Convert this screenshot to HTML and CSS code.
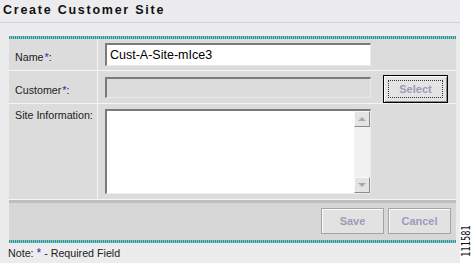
FILE: index.html
```html
<!DOCTYPE html>
<html>
<head>
<meta charset="utf-8">
<link rel="stylesheet" href="styles.css">
</head>
<body>
<div class="page">
  <div class="main">
    <div class="title">Create Customer Site</div>
    <div class="panel">
      <div class="teal"></div>
      <div class="row r1">
        <div class="lbl">Name<sup class="req">*</sup>:</div>
        <div class="fld">
          <input class="txt" type="text" value="Cust-A-Site-mIce3">
        </div>
      </div>
      <div class="row r2">
        <div class="lbl">Customer<sup class="req">*</sup>:</div>
        <div class="fld">
          <div class="txt dis"></div>
          <button class="btn sel"><span class="focus">Select</span></button>
        </div>
      </div>
      <div class="row r3">
        <div class="lbl top">Site Information:</div>
        <div class="fld top">
          <div class="ta">
            <textarea class="tai"></textarea>
            <div class="sb">
              <div class="sbb"><span class="arr up"></span></div>
              <div class="sbt"></div>
              <div class="sbb"><span class="arr dn"></span></div>
            </div>
          </div>
        </div>
      </div>
      <div class="rule"></div>
      <div class="bar">
        <button class="btn act">Save</button>
        <button class="btn act">Cancel</button>
      </div>
      <div class="teal"></div>
    </div>
    <div class="note">Note: <span class="star">*</span> - Required Field</div>
  </div>
  <div class="side"><span class="code">111581</span></div>
</div>
</body>
</html>
```

FILE: styles.css
```css
html, body {
  margin: 0;
  padding: 0;
  background: #ffffff;
}
.page {
  display: flex;
  width: 473px;
  height: 263px;
  overflow: hidden;
  font-family: "Liberation Sans", Arial, sans-serif;
}
.main {
  width: 460px;
  height: 263px;
  background: #ecebed;
  display: flex;
  flex-direction: column;
}
.title {
  height: 22px;
  border-bottom: 1px solid #d4d3d6;
  box-sizing: content-box;
  padding-left: 3px;
  font-size: 12.5px;
  font-weight: bold;
  letter-spacing: 1.75px;
  line-height: 21px;
  color: #111;
}
.panel {
  margin: 13px 4px 0 9px;
  display: flex;
  flex-direction: column;
}
.teal {
  height: 3px;
  background: repeating-linear-gradient(90deg, #2e9696 0 1px, #8ccaca 1px 2px);
}
.row {
  display: flex;
  background: #dcdcdc;
  border-bottom: 1px solid #f5f5f5;
}
.r1 { height: 31px; }
.r2 { height: 32px; }
.r3 { height: 95px; }
.lbl {
  width: 89px;
  flex: none;
  box-sizing: border-box;
  padding-left: 6px;
  padding-top: 5px;
  display: flex;
  align-items: center;
  font-size: 10.7px;
  color: #222;
  border-right: 1px solid #f5f5f5;
}
.lbl.top {
  align-items: flex-start;
  padding-top: 5px;
}
.req {
  color: #2a2aa6;
  font-size: 11px;
  vertical-align: 6px;
  line-height: 0;
  margin-left: 1px;
}
.fld {
  flex: 1;
  display: flex;
  align-items: center;
  padding-left: 7px;
}
.fld.top {
  align-items: flex-start;
  padding-top: 5px;
}
.txt {
  width: 266px;
  height: 23px;
  box-sizing: border-box;
  margin: 0;
  padding: 0 3px;
  border-style: solid;
  border-width: 2px 1px 1px 2px;
  border-color: #7a7a7a #e9e9e9 #e9e9e9 #7a7a7a;
  background: #ffffff;
  font-family: "Liberation Sans", Arial, sans-serif;
  font-size: 12.5px;
  color: #000;
  outline: none;
}
.txt.dis {
  height: 21px;
  background: #dcdcdc;
}
.btn {
  margin: 0;
  padding: 0;
  box-sizing: border-box;
  font-family: "Liberation Sans", Arial, sans-serif;
  font-weight: bold;
  font-size: 11px;
  color: #9c9cba;
  background: #e4e4e4;
  cursor: default;
}
.sel {
  margin-left: 12px;
  margin-top: 3px;
  width: 65px;
  height: 28px;
  border: 1px solid #000;
  box-shadow: inset 1px 1px 0 #fafafa, inset -1px -1px 0 #8a8a8a;
  display: flex;
  padding: 4px;
}
.focus {
  flex: 1;
  border: 1px dotted #333;
  display: flex;
  align-items: center;
  justify-content: center;
}
.ta {
  width: 266px;
  height: 85px;
  box-sizing: border-box;
  display: flex;
  border-style: solid;
  border-width: 2px 1px 1px 2px;
  border-color: #7a7a7a #ececec #ececec #7a7a7a;
  background: #fff;
}
.tai {
  flex: 1;
  border: none;
  margin: 0;
  padding: 0;
  resize: none;
  outline: none;
  background: #fff;
}
.sb {
  width: 16px;
  display: flex;
  flex-direction: column;
  background: #f1f1f1;
}
.sbb {
  height: 16px;
  box-sizing: border-box;
  background: #e4e4e4;
  border-style: solid;
  border-width: 1px;
  border-color: #fafafa #8c8c8c #8c8c8c #fafafa;
  display: flex;
  align-items: center;
  justify-content: center;
}
.sbt { flex: 1; }
.arr {
  width: 0;
  height: 0;
  border-left: 4px solid transparent;
  border-right: 4px solid transparent;
}
.arr.up { border-bottom: 4px solid #a9a9a9; }
.arr.dn { border-top: 4px solid #a9a9a9; }
.rule {
  height: 3px;
  background: #bebebe;
}
.bar {
  height: 37px;
  background: #d7d7d7;
  display: flex;
  justify-content: flex-end;
  align-items: flex-start;
  gap: 4px;
  padding: 5px 5px 0 0;
  box-sizing: border-box;
}
.act {
  width: 63px;
  height: 26px;
  border: 1px solid #a4a4a4;
  box-shadow: inset 1px 1px 0 #fafafa;
  background: #e2e2e2;
}
.note {
  padding: 4px 0 0 8px;
  font-size: 10.7px;
  color: #222;
  line-height: 13px;
}
.star {
  color: #2a2aa6;
  font-size: 12px;
}
.side {
  flex: 1;
  display: flex;
  flex-direction: column;
  justify-content: flex-end;
  align-items: center;
  padding-bottom: 0;
}
.code {
  writing-mode: vertical-rl;
  transform: rotate(180deg) scaleY(0.72);
  transform-origin: center center;
  font-family: "DejaVu Sans", sans-serif;
  font-size: 11.5px;
  line-height: 11px;
  color: #111;
}
```
